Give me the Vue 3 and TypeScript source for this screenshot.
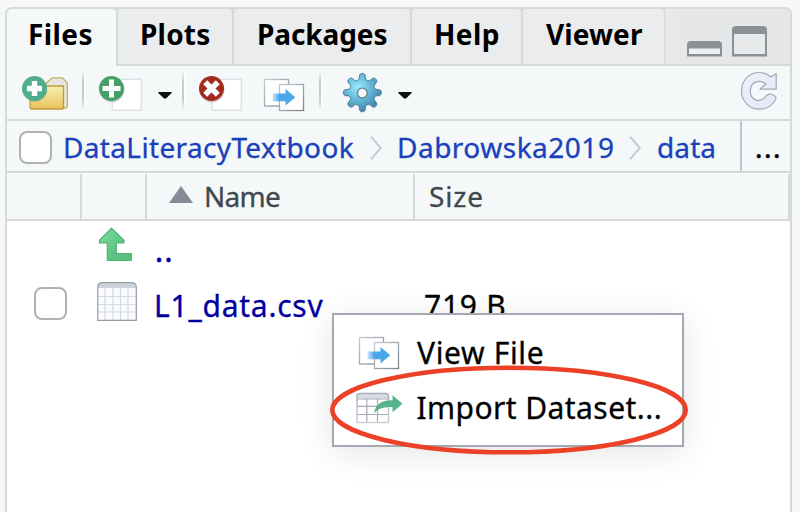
<script setup lang="ts">
interface Tab { label: string; cls: string }

const tabs: Tab[] = [
  { label: 'Files', cls: 'tab-files' },
  { label: 'Plots', cls: 'tab-plots' },
  { label: 'Packages', cls: 'tab-packages' },
  { label: 'Help', cls: 'tab-help' },
  { label: 'Viewer', cls: 'tab-viewer' },
]

// Gear outline: eight rounded teeth around a shared centre.
function gearPath(cx: number, cy: number): string {
  const pt = (r: number, deg: number) => {
    const a = (deg * Math.PI) / 180
    return `${(cx + r * Math.cos(a)).toFixed(2)} ${(cy + r * Math.sin(a)).toFixed(2)}`
  }
  let d = `M${pt(13.6, -14)}`
  for (let i = 0; i < 8; i++) {
    const a = i * 45
    d += `L${pt(17.6, a - 9)}Q${pt(18.8, a - 7)} ${pt(19, a - 3)}L${pt(19, a + 3)}`
    d += `Q${pt(18.8, a + 7)} ${pt(17.6, a + 9)}L${pt(13.6, a + 14)}`
    d += `Q${pt(12.6, a + 22.5)} ${pt(13.6, a + 31)}`
  }
  return d + 'Z'
}
const gear = gearPath(22.3, 21.5)
</script>

<template>
  <div class="page">
    <div class="pane">
      <div class="tabs">
        <div v-for="t in tabs" :key="t.label" class="tab" :class="t.cls">{{ t.label }}</div>
        <div class="window-buttons">
          <svg width="35" height="16" viewBox="0 0 35 16">
            <path d="M0 16V4Q0 0 4 0H31Q35 0 35 4V16Z" fill="#8a9194" />
            <rect x="2" y="7.500" width="31" height="5.500" fill="#eff0f1" />
            <rect x="0" y="15" width="35" height="1" fill="#b7bcbf" />
          </svg>
          <svg width="35" height="31" viewBox="0 0 35 31">
            <path d="M0 31V4Q0 0 4 0H31Q35 0 35 4V31Z" fill="#8a9194" />
            <rect x="2" y="8" width="31" height="20" fill="#e8e9ea" />
            <rect x="0" y="30" width="35" height="1" fill="#b7bcbf" />
          </svg>
        </div>
      </div>

      <div class="toolbar">
        <svg class="i-folder" width="52" height="42" viewBox="20 71 52 42">
          <defs>
            <linearGradient id="fold" x1="0" y1="0" x2="0" y2="1">
              <stop offset="0" stop-color="#f8efb4" /><stop offset="1" stop-color="#e7c25d" />
            </linearGradient>
          </defs>
          <path d="M45.500 84L52 77.800H62.500L67.300 83V106.500Q67.300 108 65.500 108H46Z" fill="#e5e7e5" stroke="#c7ad5c" stroke-width="1.300" />
          <path d="M30.300 86H63.500V107.500Q63.500 109 62 109H31.500Q30 109 30 107.500Z" fill="url(#fold)" stroke="#c09a3a" stroke-width="1.300" />
          <circle cx="35" cy="89.500" r="12.300" fill="#5d756b" opacity=".3" />
          <circle cx="34.500" cy="88.500" r="12.500" fill="#4fad8d" />
          <path d="M34.500 81V96M27 88.500H42" stroke="#fff" stroke-width="5.400" />
        </svg>
        <i class="sep sep-a"></i>
        <svg class="i-new" width="50" height="42" viewBox="96 71 50 42">
          <rect x="112.300" y="79.300" width="29" height="31" fill="#fff" stroke="#dce1e8" stroke-width="1.400" />
          <circle cx="112" cy="89.800" r="12.500" fill="#778f83" opacity=".35" />
          <circle cx="111.500" cy="88.500" r="12.500" fill="#469f67" />
          <path d="M111.500 79.500V97.500M102.500 88.500H120.500" stroke="#fff" stroke-width="5" />
        </svg>
        <svg class="caret caret-a" width="14" height="7" viewBox="0 0 14 7"><path d="M.3 0H13.700V1L8 6.500H6L.3 1Z" fill="#111" /></svg>
        <i class="sep sep-b"></i>
        <svg class="i-del" width="50" height="42" viewBox="196 71 50 42">
          <rect x="212.300" y="79.300" width="29" height="31" fill="#fff" stroke="#dce1e8" stroke-width="1.400" />
          <circle cx="212" cy="89.800" r="12.500" fill="#8f7777" opacity=".35" />
          <circle cx="211.500" cy="88.500" r="12.500" fill="#a52b21" />
          <path d="M205.200 82.200L217.800 94.800M217.800 82.200L205.200 94.800" stroke="#fff" stroke-width="5.600" />
        </svg>
        <svg class="i-view" width="42" height="34" viewBox="0 0 42 34">
          <defs>
            <linearGradient id="sheet" x1="0" y1="0" x2="1" y2="1">
              <stop offset="0" stop-color="#c6cbd1" /><stop offset="1" stop-color="#7d848f" />
            </linearGradient>
            <linearGradient id="arrow" x1="0" y1="0" x2="1" y2="0">
              <stop offset="0" stop-color="#4aa7ea" stop-opacity=".25" /><stop offset=".3" stop-color="#4aa7ea" />
            </linearGradient>
            <g id="view-file">
              <rect x="1.500" y="1.500" width="24" height="26.500" fill="#fff" stroke="url(#sheet)" stroke-width="1.300" />
              <rect x="16.500" y="6.500" width="24" height="26" fill="#fff" stroke="url(#sheet)" stroke-width="1.300" />
              <path d="M9.500 15.500H22.500V11L32.300 19.200L22.500 27.500V23.300H9.500Z" fill="url(#arrow)" />
            </g>
          </defs>
          <use href="#view-file" />
        </svg>
        <i class="sep sep-c"></i>
        <svg class="i-gear" width="44" height="44" viewBox="0 0 44 44">
          <defs>
            <radialGradient id="gearfill" cx=".38" cy=".36" r=".65">
              <stop offset="0" stop-color="#9aeafb" /><stop offset=".5" stop-color="#67b9d8" /><stop offset="1" stop-color="#4287ad" />
            </radialGradient>
          </defs>
          <path :d="gear" transform="translate(.3 1.200)" fill="#7e98a7" opacity=".35" />
          <path :d="gear" fill="url(#gearfill)" stroke="#477c98" stroke-width=".9" stroke-linejoin="round" />
          <circle cx="22.300" cy="22" r="4.900" fill="#f4f8f9" stroke="#68848e" stroke-width="1.300" />
        </svg>
        <svg class="caret caret-b" width="14" height="7" viewBox="0 0 14 7"><path d="M.3 0H13.700V1L8 6.500H6L.3 1Z" fill="#111" /></svg>
        <svg class="i-refresh" width="40" height="42" viewBox="739 70 40 42">
          <defs>
            <linearGradient id="refr" x1="0" y1="0" x2="1" y2="1">
              <stop offset="0" stop-color="#eef1fa" /><stop offset="1" stop-color="#dfe8fb" />
            </linearGradient>
          </defs>
          <path d="M771 77L776.200 73.500V89.200H760L766 83.800C758 78.800 750.300 82.500 750.300 91C750.300 100.500 759 103 765 97.500C767 94 769 93.300 772 94.500C776 95.700 777 98 775 100.500C771 107 766 109.200 759.500 109.200C749 109.200 741.500 101 741.500 91C741.500 80.500 749 72.500 759.500 72.500C764.500 72.500 768 74.500 771 77Z" fill="url(#refr)" stroke="#a5a9b4" stroke-width="1.200" stroke-linejoin="round" />
        </svg>
      </div>

      <div class="crumbs">
        <span class="box"></span>
        <span class="crumb c1">DataLiteracyTextbook</span>
        <svg class="chev" width="13" height="24" viewBox="0 0 13 24"><path d="M1.500 2L11.500 13L1.500 24" fill="none" stroke="#fff" stroke-width="2" /><path d="M1 .8L10.800 12L1 23.200" fill="none" stroke="#c9cdd2" stroke-width="2.200" /></svg>
        <span class="crumb c2">Dabrowska2019</span>
        <svg class="chev" width="13" height="24" viewBox="0 0 13 24"><path d="M1.500 2L11.500 13L1.500 24" fill="none" stroke="#fff" stroke-width="2" /><path d="M1 .8L10.800 12L1 23.200" fill="none" stroke="#c9cdd2" stroke-width="2.200" /></svg>
        <span class="crumb c3">data</span>
        <span class="more">...</span>
      </div>

      <div class="head">
        <div class="h-check"></div>
        <div class="h-icon"></div>
        <div class="h-name">
          <svg width="24" height="17" viewBox="0 0 24 17"><path d="M12 0L24 17H0Z" fill="#848a98" /></svg>
          <span>Name</span>
        </div>
        <div class="h-size">Size</div>
      </div>

      <div class="row row-up">
        <div class="r-check"></div>
        <div class="r-icon">
          <svg width="35" height="35" viewBox="98.500 227.500 35 35">
            <defs>
              <linearGradient id="up" x1="0" y1="0" x2="1" y2="1">
                <stop offset="0" stop-color="#7bdc9b" /><stop offset=".6" stop-color="#5dc583" /><stop offset="1" stop-color="#60bb7d" />
              </linearGradient>
            </defs>
            <path d="M112 228.800L124.500 241V243.300H116.800V254H131.800V260.800H107.800V243.300H100V240.600Z" fill="url(#up)" stroke="#4db374" stroke-width="1.200" stroke-linejoin="round" />
          </svg>
        </div>
        <div class="r-name">..</div>
      </div>
      <div class="row row-file">
        <div class="r-check"><span class="box"></span></div>
        <div class="r-icon">
          <svg width="40" height="39" viewBox="0 0 40 39">
            <path d="M.7 38.300V5.500Q.7 .7 5.500 .7H34.500Q39.300 .7 39.300 5.500V38.300Z" fill="#fafbfc" />
            <path d="M.7 6V5.500Q.7 .7 5.500 .7H34.500Q39.300 .7 39.300 5.500V6Z" fill="#cdd3db" />
            <path d="M8 6V38M16 6V38M23.500 6V38M31 6V38M1 14.500H39M1 22.500H39M1 30H39" stroke="#d5d9e0" stroke-width="1.200" />
            <path d="M.7 38.300V5.500Q.7 .7 5.500 .7H34.500Q39.300 .7 39.300 5.500V38.300Z" fill="none" stroke="#959fa8" stroke-width="1.200" />
          </svg>
        </div>
        <div class="r-name">L1_data.csv</div>
        <div class="r-size">719 B</div>
      </div>
    </div>

    <div class="menu">
      <div class="item item-view">
        <svg width="42" height="34" viewBox="0 0 42 34"><use href="#view-file" /></svg>
        <span>View File</span>
      </div>
      <div class="item item-import">
        <svg width="48" height="32" viewBox="356 391.500 48 32">
          <defs>
            <linearGradient id="imp" x1="0" y1="0" x2="0" y2="1">
              <stop offset="0" stop-color="#a8aeb9" /><stop offset="1" stop-color="#ccd1d7" />
            </linearGradient>
          </defs>
          <path d="M357 422V396Q357 393 360 393H385.500Q388.500 393 388.500 396V422Z" fill="#fff" />
          <path d="M357 398V396Q357 393 360 393H385.500Q388.500 393 388.500 396V398Z" fill="#d8dde3" />
          <path d="M366.800 398V422M377.500 398V422M357 398.500H388.500M357 405.800H388.500M357 414H388.500" stroke="#a5abb9" stroke-width="1.200" fill="none" />
          <path d="M357 422V396Q357 393 360 393H385.500Q388.500 393 388.500 396V422Z" fill="none" stroke="url(#imp)" stroke-width="1.500" />
          <path d="M374 412.500Q376 399.500 392.500 399.700V394.800L402.500 403.200L392.500 411.800V406.500Q380 405.500 374 412.500Z" fill="#56b48d" />
        </svg>
        <span>Import Dataset...</span>
      </div>
    </div>

    <svg class="ring" width="364" height="96" viewBox="0 0 364 96">
      <ellipse cx="182" cy="48" rx="176.700" ry="42.300" fill="none" stroke="#ec4127" stroke-width="4.600" />
    </svg>
  </div>
</template>

<style>
body { background: #f5f7f9; overflow: hidden; }
</style>
<style scoped>
.page {
  position: relative;
  width: 800px;
  height: 512px;
  box-sizing: border-box;
  padding: 7px 8px 0 5px;
  overflow: hidden;
  background: #f5f7f9;
  font-family: "Noto Sans", "Open Sans", sans-serif;
  font-size: 28px;
  color: #000;
  white-space: nowrap;
  -webkit-text-stroke: .3px currentColor;
}
.page * { box-sizing: border-box; }
svg { display: block; flex: none; }
.pane {
  height: 505px;
  border: 2px solid #d5d9dc;
  border-bottom: 0;
  border-radius: 7px 7px 0 0;
  background: #fff;
  overflow: hidden;
}
.tabs { display: flex; height: 57px; background: #d5d9dc; }
.tab {
  height: 57px;
  line-height: 51px;
  font-weight: 700;
  letter-spacing: .2px;
  background: #ebeced;
  border-left: 2px solid #d5d9dc;
  border-bottom: 2px solid #d5d9dc;
  border-radius: 4px 4px 0 0;
  -webkit-text-stroke: 0;
}
.tab-files { width: 109px; padding-left: 21px; background: #f4f8f9; border-left: 0; border-bottom: 0; letter-spacing: .4px; }
.tab-plots { width: 116px; padding-left: 22px; }
.tab-packages { width: 178px; padding-left: 23px; letter-spacing: -.1px; }
.tab-help { width: 111px; padding-left: 22px; letter-spacing: .4px; }
.tab-viewer { width: 143px; padding-left: 23px; letter-spacing: .1px; }
.window-buttons {
  flex: 1;
  display: flex;
  align-items: flex-end;
  gap: 10px;
  padding: 0 0 7px 21px;
  border-left: 2px solid #dcdfe1;
  border-bottom: 2px solid #d5d9dc;
  background: linear-gradient(90deg, #eaebec, #e6e7e8 12px);
}
.toolbar {
  display: flex;
  align-items: flex-start;
  height: 55px;
  padding: 5px 11px 0 13px;
  background: #f4f8f9;
  border-bottom: 2px solid #d5d9dc;
}
.sep { width: 4px; height: 40px; margin-top: -1px; flex: none; background: linear-gradient(90deg, #c9cccd 50%, #fdfefe 50%); mask-image: linear-gradient(transparent, #000 30%, #000 75%, transparent); }
.sep-a { margin-left: 10px; }
.i-new { margin-left: 10px; }
.caret { margin-top: 21px; }
.caret-a { margin-left: 12px; }
.sep-b { margin-left: 10px; }
.i-del { margin-left: 10px; }
.i-view { margin: 7px 0 0 17px; }
.sep-c { margin-left: 14px; }
.i-gear { margin-left: 17px; }
.caret-b { margin-left: 14px; }
.i-refresh { margin: -1px 0 0 auto; }
.crumbs {
  display: flex;
  align-items: center;
  height: 52px;
  padding-left: 12px;
  line-height: 52px;
  color: #1a41ba;
  letter-spacing: .35px;
  background: #f4f8f9;
  border-bottom: 2px solid #d5d9dc;
}
.box { display: block; flex: none; width: 33px; height: 33px; border: 2px solid #b1b1b1; border-radius: 8px; background: #fff; }
.crumbs .box { margin-top: 3px; }
.crumb { flex: none; height: 50px; }
.chev { margin: 3px 0 0 -1px; }
.c1 { width: 317px; padding-left: 9px; margin-left: 2px; }
.c2 { width: 247px; padding-left: 14px; letter-spacing: .5px; }
.c3 { width: 98px; padding-left: 15px; letter-spacing: .1px; }
.more { flex: 1; height: 50px; padding-left: 13px; border-left: 2px solid #c2c6cd; color: #000; letter-spacing: 1.5px; -webkit-text-stroke-width: .6px; }
.head {
  display: flex;
  height: 48px;
  border-top: 1px solid #fff;
  border-bottom: 2px solid #d5d9dc;
  background: #f4f8f9;
  color: #3f484d;
  line-height: 45px;
}
.head > div { border-right: 2px solid #d5d9dc; }
.h-check { width: 75px; }
.h-icon { width: 65px; }
.h-name { display: flex; align-items: center; width: 268px; padding-left: 22px; gap: 11px; letter-spacing: -.7px; }
.h-name svg { margin-top: -4px; }
.h-size { flex: 1; padding-left: 14px; letter-spacing: .8px; }
.row { display: flex; font-size: 30px; letter-spacing: .75px; }
.row-up { height: 55px; }
.row-file { height: 60px; }
.r-check { width: 75px; padding: 11px 0 0 27px; }
.r-icon { width: 72px; }
.row-up .r-icon { padding: 6px 0 0 16px; }
.row-file .r-icon { padding: 6px 0 0 15px; }
.r-name { width: 270px; color: #0000a0; }
.row-up .r-name { line-height: 59px; padding-left: 1px; letter-spacing: 1.5px; -webkit-text-stroke-width: .6px; }
.row-file .r-name, .r-size { line-height: 60px; }
.menu {
  position: absolute;
  left: 332px;
  top: 313px;
  width: 352px;
  height: 134px;
  padding: 11px 0 0 23px;
  border: 2px solid #a3a9b3;
  background: #fff;
  box-shadow: 0 6px 32px rgba(0, 0, 0, .11);
  font-size: 30px;
  letter-spacing: .65px;
}
.item { display: flex; height: 55px; line-height: 53px; }
.item-view svg { margin: 10px 17px 0 1px; }
.item-import svg { margin: 11px 12.500px 0 -1px; }
.item-import { letter-spacing: .42px; line-height: 54px; }
.ring { position: absolute; left: 326.500px; top: 362px; }
</style>
